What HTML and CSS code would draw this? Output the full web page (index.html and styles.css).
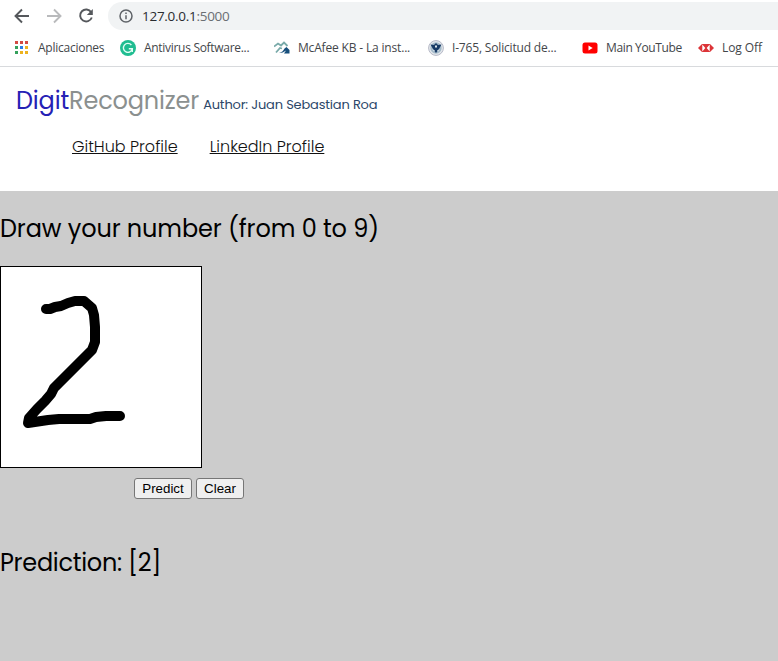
FILE: index.html
```html
<!DOCTYPE html>
<html lang="es">
<head>
<meta charset="utf-8">
<title>DigitRecognizer</title>
<link rel="stylesheet" href="styles.css">
</head>
<body>
<div class="browser">
  <div class="toolbar">
    <svg class="nav" viewBox="0 0 16 16"><path d="M15 8H2M8 1.5L1.5 8L8 14.5"/></svg>
    <svg class="nav forward" viewBox="0 0 16 16"><path d="M1 8H14M8 1.5L14.5 8L8 14.5"/></svg>
    <svg class="nav" viewBox="0 0 16 16"><path d="M13.2 4.2A6 6 0 1 0 13.8 9.5"/><path class="solid" d="M14.8 1V7H8.8Z"/></svg>
    <div class="address">
      <svg class="info" viewBox="0 0 14 14"><circle cx="7" cy="7" r="6"/><path d="M7 6.2V10.3M7 3.6V5"/></svg>
      <span class="url">127.0.0.1<span class="port">:5000</span></span>
    </div>
  </div>
  <div class="bookmarks">
    <div class="bookmark">
      <svg viewBox="0 0 16 16"><path fill="#d34a43" d="M1 1h3v3H1zM6 1h3v3H6zM11 1h3v3h-3z"/><path fill="#35a15c" d="M1 6h3v3H1zM1 11h3v3H1z"/><path fill="#2b7de9" d="M6 6h3v3H6z"/><path fill="#edb21f" d="M11 6h3v3h-3zM6 11h3v3H6zM11 11h3v3h-3z"/></svg>
      <span class="t1">Aplicaciones</span>
    </div>
    <div class="bookmark">
      <svg viewBox="0 0 16 16"><circle cx="8" cy="8" r="8" fill="#20bd91"/><path d="M11.4 5A4.5 4.5 0 1 0 12.3 8.8H8.8M12.3 8.8V12" fill="none" stroke="#e2fff5" stroke-width="1.4"/></svg>
      <span class="t2">Antivirus Software...</span>
    </div>
    <div class="bookmark">
      <svg viewBox="0 0 16 16"><path d="M0 6.5L4 3.5L7 5.5L10 2.5L13.5 6M2 12.5L6 8L8 8.5" fill="none" stroke="#79aaa9" stroke-width="1.8"/><path d="M5 13Q9 12 10.5 8.5L12.5 7L15.5 10V13.5H10L12 10.5Q9 13 5 13Z" fill="#174f7c"/></svg>
      <span class="t3">McAfee KB - La inst...</span>
    </div>
    <div class="bookmark">
      <svg viewBox="0 0 16 16"><circle cx="8" cy="8" r="7.4" fill="#e5e9ed" stroke="#b5b8c6"/><circle cx="8" cy="8" r="5.7" fill="#a5bac9"/><path d="M2.5 4.5L6 5L8 3L10 5L13.5 4.5L11 9L8 13L5 9Z" fill="#173a65"/><path d="M7 5.5h2V7L8 8L7 7zM4 9l3 1.5-1 1zM12 9l-3 1.5 1 1z" fill="#dce5ec"/></svg>
      <span class="t4">I-765, Solicitud de...</span>
    </div>
    <div class="bookmark">
      <svg viewBox="0 0 16 16"><rect x=".5" y="2.5" width="15" height="11" rx="2.5" fill="#f00"/><path d="M6.5 5.5L10.7 8L6.5 10.5Z" fill="#fff"/></svg>
      <span class="t5">Main YouTube</span>
    </div>
    <div class="bookmark">
      <svg viewBox="0 0 16 16"><path d="M0 8L4 4H12L16 8L12 12H4Z" fill="#dc3438"/><path d="M4.3 4.6L7.3 8L4.3 11.4ZM11.7 4.6L8.7 8L11.7 11.4Z" fill="#fff"/></svg>
      <span class="t6">Log Off</span>
    </div>
  </div>
</div>
<header>
  <div class="brand"><span class="digit">Digit</span><span class="recognizer">Recognizer</span><span class="author">Author: Juan Sebastian Roa</span></div>
  <nav><a class="github" href="#">GitHub Profile</a><a class="linkedin" href="#">LinkedIn Profile</a></nav>
</header>
<main>
  <h1>Draw your number (from 0 to 9)</h1>
  <svg class="drawing" viewBox="0 0 200 200"><path d="M45 42L49 42L54 40L60 39L67 36L74 34L83 34L91 41L93 48L94 60L94 75L91 83L58 116L53 121L50 127L44 134L36 142L28 151L27 156L47 153L58 152L89 152L95 150L105 149L119 149"/></svg>
  <div class="actions"><button type="button" class="predict">Predict</button><button type="button" class="clear">Clear</button></div>
  <h2>Prediction: [2]</h2>
</main>
</body>
</html>
```
FILE: styles.css
```css
* { box-sizing: border-box; }
body { margin: 0; background: #ccc; color: #000; font-family: Poppins, Inter, sans-serif; }
.browser { height: 67px; background: #fff; border-bottom: 1px solid #d8dadd; font-family: "Segoe UI", "Open Sans", sans-serif; overflow: hidden; }
.toolbar { height: 31px; display: flex; align-items: center; padding-left: 14px; gap: 16px; }
.nav { width: 16px; height: 16px; flex: none; fill: none; stroke: #55585c; stroke-width: 1.9; }
.forward { stroke: #b9babc; }
.solid { fill: #55585c; stroke: none; }
.address { height: 28px; flex: 1; margin-left: -2px; border-radius: 14px 0 0 14px; background: #f1f3f4; display: flex; align-items: center; padding-left: 11px; margin-top: 1px; }
.info { width: 14px; height: 14px; fill: none; stroke: #5f6368; stroke-width: 1.5; margin-right: 9px; }
.url { font-size: 13.5px; line-height: 20px; letter-spacing: -.28px; color: #292c30; white-space: nowrap; }
.port { color: #6a6e73; }
.bookmarks { height: 34px; padding-left: 14px; display: grid; grid-template-columns: 106px 154px 154px 154px 116px 80px; align-items: center; }
.bookmark { display: flex; align-items: center; gap: 8px; color: #43464a; font-size: 12px; line-height: 16px; white-space: nowrap; }
.bookmark svg { width: 16px; height: 16px; flex: none; }
.t1 { letter-spacing: -.25px; }
.t2 { letter-spacing: -.3px; }
.t3 { letter-spacing: -.17px; }
.t4 { letter-spacing: -.17px; }
.t5 { letter-spacing: -.37px; }
.t6 { letter-spacing: -.1px; }
header { height: 124px; background: #fff; padding: 16px 16px 0; }
.brand { height: 37px; display: flex; align-items: baseline; line-height: 36px; font-size: 24px; white-space: nowrap; }
.digit { color: #2521b5; letter-spacing: -.15px; }
.recognizer { color: #8b908f; letter-spacing: -.15px; }
.author { color: #2c4769; font-size: 13px; margin-left: 4px; letter-spacing: -.18px; }
nav { display: flex; gap: 32px; margin: 15px 0 0 56px; font-size: 16px; font-weight: 300; line-height: 24px; }
nav a { color: #111; text-decoration: underline; text-decoration-thickness: 1px; text-underline-offset: 1px; white-space: nowrap; }
main { display: flex; flex-direction: column; align-items: flex-start; height: 470px; background: #ccc; }
h1, h2 { margin: 0; font-weight: 400; font-size: 24px; line-height: 36px; white-space: nowrap; }
h1 { margin-top: 20px; letter-spacing: -.1px; }
.drawing { width: 202px; height: 202px; margin-top: 19px; border: 1px solid #000; background: #fff; fill: none; stroke: #000; stroke-width: 10; stroke-linecap: round; stroke-linejoin: round; }
.actions { margin: 10px 0 0 134px; display: flex; gap: 4px; }
button { height: 21px; padding: 0; border: 1px solid #767676; border-radius: 3px; background: #efefef; color: #000; font: 13.333px/19px "Liberation Sans", Arial, sans-serif; }
.predict { width: 58px; }
.clear { width: 48px; }
h2 { margin-top: 46px; letter-spacing: -.28px; }
```
